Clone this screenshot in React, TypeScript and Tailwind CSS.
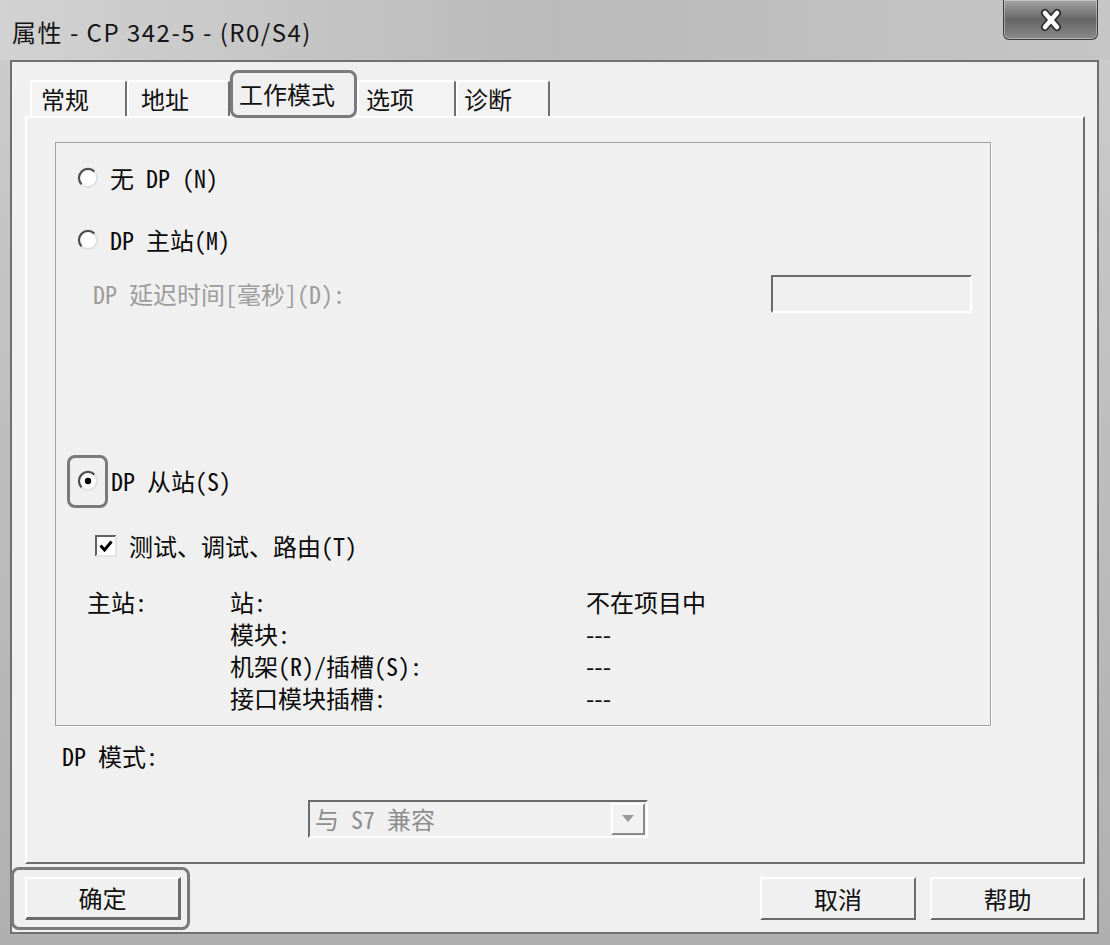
import React from 'react';

const Radio: React.FC<{ checked?: boolean }> = ({ checked }) => (
  <svg width="22" height="22" viewBox="0 0 22 22" className="shrink-0">
    <circle cx="11" cy="11" r="9" fill="#ffffff" />
    <path d="M4.6 17.4 A9 9 0 0 1 17.4 4.6" stroke="#4e4e4e" strokeWidth="2.2" fill="none" />
    <path d="M17.4 4.6 A9 9 0 0 1 4.6 17.4" stroke="#e0e0e0" strokeWidth="2" fill="none" />
    {checked && <circle cx="11" cy="11" r="3.2" fill="#000000" />}
  </svg>
);

const CheckBox: React.FC = () => (
  <svg width="22" height="22" viewBox="0 0 22 22" className="shrink-0">
    <rect x="1" y="1" width="20" height="20" fill="#ffffff" />
    <path d="M1 21 V1 H21" stroke="#606060" strokeWidth="2" fill="none" />
    <path d="M21 1 V21 H1" stroke="#e4e4e4" strokeWidth="2" fill="none" />
    <path d="M5.5 10.5 L9.5 15 L16.5 6.5" stroke="#000000" strokeWidth="3" fill="none" />
  </svg>
);

const Tab: React.FC<{ label: string; w: string; pl: string; first?: boolean }> = ({ label, w, pl, first }) => (
  <div
    className={`h-[36px] ${w} ${pl} ${first ? 'ml-[5px]' : ''} flex items-center border-t-2 border-l-2 border-r-2 border-white border-r-[#6f6f6f] rounded-t-[3px] bg-[#f3f3f3] text-[24px] leading-none text-[#111] font-['Noto_Sans_CJK_SC',sans-serif]`}
  >
    {label}
  </div>
);

const WinButton: React.FC<{ label: string; w: string; def?: boolean }> = ({ label, w, def }) => (
  <button
    className={`${w} h-[43px] flex items-center justify-center bg-[#f0f0f0] border-2 ${def ? 'border-b-[3px] border-r-[3px]' : ''} border-[#6b6b6b] border-t-white border-l-white text-[24px] leading-none text-[#111] font-['Noto_Sans_CJK_SC',sans-serif]`}
  >
    {label}
  </button>
);

const masterRows: [string, string, string][] = [
  ['主站:', '站:', '不在项目中'],
  ['', '模块:', '---'],
  ['', '机架(R)/插槽(S):', '---'],
  ['', '接口模块插槽:', '---'],
];

export default function App() {
  return (
    <div className="w-[1110px] h-[945px] flex flex-col overflow-hidden bg-gradient-to-b from-[#cdcdcd] via-[#bdbdbd] to-[#b0b0b0]">
      {/* Title bar */}
      <div className="h-[60px] shrink-0 flex items-start justify-between bg-gradient-to-r from-[#d2d2d2] via-[#bababa] to-[#c6c6c6]">
        <span className="ml-[12px] mt-[17px] text-[24px] tracking-[1.5px] leading-[30px] text-[#151515] font-['Noto_Sans_CJK_SC',sans-serif]">
          属性 - CP 342-5 - (R0/S4)
        </span>
        <div className="mr-[12px] w-[95px] h-[40px] flex items-center justify-center rounded-b-[6px] border border-t-0 border-[#3e3e3e] bg-gradient-to-b from-[#a4a4a4] via-[#666666] to-[#8a8a8a] shadow-[inset_0_0_0_1px_rgba(255,255,255,0.35)]">
          <svg width="30" height="24" viewBox="0 0 30 24">
            <path d="M9 5 L21 19 M21 5 L9 19" stroke="#2e2e2e" strokeWidth="8" strokeLinecap="round" />
            <path d="M9 5 L21 19 M21 5 L9 19" stroke="#ffffff" strokeWidth="4.5" strokeLinecap="round" />
          </svg>
        </div>
      </div>

      {/* Client area */}
      <div className="ml-[10px] mr-[11px] mb-[11px] flex-1 flex flex-col border-2 border-[#707070] bg-[#f0f0f0]">
        {/* Tabs */}
        <div className="mt-[18px] ml-[13px] h-[36px] flex items-end">
          <Tab label="常规" w="w-[97px]" pl="pl-[9px]" first />
          <Tab label="地址" w="w-[103px]" pl="pl-[12px]" />
          <div className="relative z-10 -mb-[2px] h-[48px] w-[127px] pl-[6px] flex items-center rounded-[8px] border-[3px] border-[#7a7a7a] bg-[#f0f0f0] text-[24px] leading-none text-[#111] font-['Noto_Sans_CJK_SC',sans-serif]">
            工作模式
          </div>
          <Tab label="选项" w="w-[99px]" pl="pl-[7px]" />
          <Tab label="诊断" w="w-[94px]" pl="pl-[6px]" />
        </div>

        {/* Tab panel */}
        <div className="ml-[13px] mr-[12px] h-[748px] flex flex-col border-2 border-[#6e6e6e] border-t-white border-l-white bg-[#f0f0f0] text-[24px] text-[#0a0a0a] font-['Noto_Sans_Mono_CJK_SC','Noto_Sans_CJK_SC',monospace]">
          {/* Group box */}
          <div className="ml-[28px] mt-[24px] w-[936px] h-[584px] flex flex-col border border-[#a0a0a0] shadow-[1px_1px_0_#ffffff]">
            <div className="mt-[19px] ml-[21px] h-[32px] flex items-center gap-[11px] leading-[32px]">
              <Radio />
              <span>无 DP (N)</span>
            </div>
            <div className="mt-[30px] ml-[21px] h-[32px] flex items-center gap-[11px] leading-[32px]">
              <Radio />
              <span>DP 主站(M)</span>
            </div>
            <div className="mt-[19px] h-[38px] pl-[37px] pr-[18px] flex items-center justify-between">
              <span className="text-[#9d9d9d] leading-[32px]">DP 延迟时间[毫秒](D):</span>
              <div className="w-[201px] h-[38px] border-2 border-white border-t-[#6b6b6b] border-l-[#6b6b6b] bg-[#f0f0f0]" />
            </div>
            <div className="mt-[152px] ml-[11px] h-[32px] flex items-center gap-[3px] leading-[32px]">
              <div className="h-[53px] pl-[7px] pr-[6px] flex items-center rounded-[8px] border-[3px] border-[#7a7a7a]">
                <Radio checked />
              </div>
              <span>DP 从站(S)</span>
            </div>
            <div className="mt-[33px] ml-[39px] h-[32px] flex items-center gap-[12px] leading-[32px]">
              <CheckBox />
              <span>测试、调试、路由(T)</span>
            </div>
            <div className="mt-[24px] pl-[31px] grid grid-cols-[143px_356px_auto] auto-rows-[32px] items-center leading-[32px]">
              {masterRows.map(([a, b, c], i) => (
                <React.Fragment key={i}>
                  <span>{a}</span>
                  <span>{b}</span>
                  <span className="font-['Noto_Sans_CJK_SC','Noto_Sans_Mono_CJK_SC',sans-serif]">{c}</span>
                </React.Fragment>
              ))}
            </div>
          </div>

          <div className="mt-[14px] ml-[35px] h-[32px] flex items-center leading-[32px]">DP 模式:</div>

          {/* Disabled select */}
          <div className="mt-[28px] ml-[281px] w-[340px] h-[38px] flex items-center justify-between border-2 border-white border-t-[#6b6b6b] border-l-[#6b6b6b] bg-[#f0f0f0]">
            <span className="pl-[5px] text-[#8e8e8e] leading-[32px]">与 S7 兼容</span>
            <div className="mr-[1px] w-[34px] h-[32px] flex items-center justify-center border-2 border-[#8a8a8a] border-t-white border-l-white bg-[#f2f2f2]">
              <svg width="12" height="8" viewBox="0 0 12 8">
                <path d="M0 0 H12 L6 7 Z" fill="#9a9a9a" />
              </svg>
            </div>
          </div>
        </div>

        {/* Buttons */}
        <div className="mt-[3px] flex items-center">
          <div className="-ml-[1px] pl-[11px] pr-[6px] py-[7px] rounded-[8px] border-[3px] border-[#7a7a7a]">
            <WinButton label="确定" w="w-[156px]" def />
          </div>
          <div className="ml-auto mr-[12px] flex gap-[14px]">
            <WinButton label="取消" w="w-[156px]" />
            <WinButton label="帮助" w="w-[155px]" />
          </div>
        </div>
      </div>
    </div>
  );
}
